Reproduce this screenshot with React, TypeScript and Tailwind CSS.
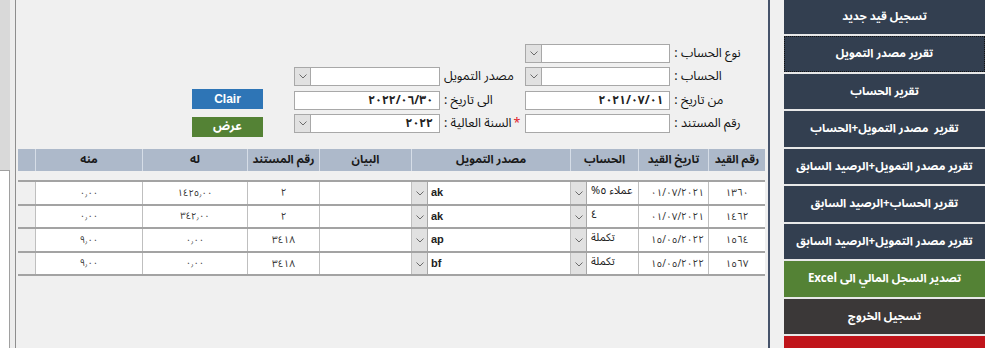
import React from "react";

const AR = "font-['Noto_Sans_Arabic','DejaVu_Sans',sans-serif]";

function Chev() {
  return (
    <svg width="8" height="5" viewBox="0 0 8 5" className="block">
      <polyline points="0.5,0.5 4,4 7.5,0.5" fill="none" stroke="#6b6b6b" strokeWidth="1" />
    </svg>
  );
}

function Combo({ value }: { value?: string }) {
  return (
    <div dir="ltr" className="flex h-[19px] w-[146px] border border-[#a8a8a8] bg-white">
      <div className="flex w-[16px] items-center justify-center border-r border-[#a8a8a8] bg-[#e1e1e1]">
        <Chev />
      </div>
      <div className="flex flex-1 items-center justify-end pr-[6px] text-[12px] font-bold leading-[15px] text-[#222]">
        <span dir="ltr">{value}</span>
      </div>
    </div>
  );
}

function TextBox({ value }: { value?: string }) {
  return (
    <div dir="ltr" className="flex h-[19px] w-[146px] items-center justify-end border border-[#a8a8a8] bg-white pr-[6px] text-[12px] font-bold leading-[15px] text-[#222]">
      <span dir="ltr">{value}</span>
    </div>
  );
}

function Row({ label, children, star }: { label: string; children: React.ReactNode; star?: boolean }) {
  return (
    <div dir="rtl" className="flex h-[19px] items-center gap-[4px]">
      <div className="flex h-[19px] w-[76px] items-center justify-end text-[12.5px] leading-[15px] text-[#111]">
        {star && <span className="ml-[2px] text-[#e0202a]">*</span>}
        <span className="whitespace-nowrap">{label}</span>
      </div>
      {children}
    </div>
  );
}

const cols = [17, 107, 105, 72, 92, 159, 68, 70, 57];
const heads = ["", "منه", "له", "رقم المستند", "البيان", "مصدر التمويل", "الحساب", "تاريخ القيد", "رقم القيد"];

const rows: { num: string; date: string; acc: React.ReactNode; src: string; doc: string; lah: string; minh: string }[] = [
  {
    num: "١٣٦٠",
    date: "٠١/٠٧/٢٠٢١",
    acc: (
      <span className="flex gap-[3px]">
        <span dir="ltr">%٥</span>
        <span dir="rtl">عملاء</span>
      </span>
    ),
    src: "ak",
    doc: "٢",
    lah: "١٤٢٥٫٠٠",
    minh: "٠٫٠٠",
  },
  { num: "١٤٦٢", date: "٠١/٠٧/٢٠٢١", acc: "٤", src: "ak", doc: "٢", lah: "٣٤٢٫٠٠", minh: "٠٫٠٠" },
  { num: "١٥٦٤", date: "١٥/٠٥/٢٠٢٢", acc: "تكملة", src: "ap", doc: "٣٤١٨", lah: "٠٫٠٠", minh: "٩٫٠٠" },
  { num: "١٥٦٧", date: "١٥/٠٥/٢٠٢٢", acc: "تكملة", src: "bf", doc: "٣٤١٨", lah: "٠٫٠٠", minh: "٩٫٠٠" },
];

function CellBtn() {
  return (
    <div className="flex h-full w-[16px] shrink-0 items-center justify-center border-r border-[#a8a8a8] bg-[#e1e1e1] pt-[2px]">
      <Chev />
    </div>
  );
}

const side = [
  { t: "تسجيل قيد جديد", c: "bg-[#333f50]" },
  { t: "تقرير مصدر التمويل", c: "bg-[#333f50] border border-dotted border-[#111]" },
  { t: "تقرير الحساب", c: "bg-[#333f50]" },
  { t: "تقرير  مصدر التمويل+الحساب", c: "bg-[#333f50]" },
  { t: "تقرير مصدر التمويل+الرصيد السابق", c: "bg-[#333f50]" },
  { t: "تقرير الحساب+الرصيد السابق", c: "bg-[#333f50]" },
  { t: "تقرير مصدر التمويل+الرصيد السابق", c: "bg-[#333f50]" },
  { t: "تصدير السجل المالي الى Excel", c: "bg-[#548235]" },
  { t: "تسجيل الخروج", c: "bg-[#3b3838]" },
  { t: "", c: "bg-[#c0141a]" },
];

export default function App() {
  return (
    <div className={`flex h-[348px] w-[1000px] overflow-hidden bg-[#f0f0f0] ${AR}`}>
      {/* left strip */}
      <div className="flex w-[16px] shrink-0">
        <div className="flex w-[10px] flex-col">
          <div className="h-[170px] bg-[#d9d9d9]" />
          <div className="flex-1 border-r border-t border-[#a0a0a0] bg-white" />
        </div>
        <div className="w-[5px] bg-[#ededed]" />
        <div className="w-[1px] bg-[#8e8e8e]" />
      </div>

      {/* main */}
      <div className="flex w-[752px] shrink-0 flex-col pt-[44px]">
        <div className="flex pl-[176px]">
          <div className="mt-[45px] flex w-[71px] flex-col gap-[8px]">
            <div className="flex h-[20px] items-center justify-center bg-[#2e75b6] font-['Liberation_Sans',sans-serif] text-[12px] font-bold text-white">
              Clair
            </div>
            <div className="flex h-[20px] items-center justify-center bg-[#548235] text-[12px] font-bold text-white">
              عرض
            </div>
          </div>
          <div className="ml-[30px] flex w-[227px] flex-col gap-[4.3px]">
            <div className="h-[19px]" />
            <Row label="مصدر التمويل">
              <Combo />
            </Row>
            <Row label="الى تاريخ :">
              <TextBox value="٢٠٢٢/٠٦/٣٠" />
            </Row>
            <Row label="السنة العالية :" star>
              <Combo value="٢٠٢٢" />
            </Row>
          </div>
          <div className="ml-[5px] flex w-[225px] flex-col gap-[4.3px]">
            <Row label="نوع الحساب :">
              <Combo />
            </Row>
            <Row label="الحساب :">
              <Combo />
            </Row>
            <Row label="من تاريخ :">
              <TextBox value="٢٠٢١/٠٧/٠١" />
            </Row>
            <Row label="رقم المستند :">
              <TextBox />
            </Row>
          </div>
        </div>

        {/* table */}
        <div className="ml-[2px] mt-[12px] flex w-[747px] flex-col">
          <div className="flex h-[22px] bg-[#adb9ca]">
            {heads.map((h, i) => (
              <div
                key={i}
                style={{ width: cols[i] }}
                className={`flex items-center justify-center text-[11.5px] font-bold text-[#1a1a1a] ${i > 0 ? "border-l border-[#d6dde7]" : ""}`}
              >
                <span dir="rtl" className="whitespace-nowrap">{h}</span>
              </div>
            ))}
          </div>
          <div className="h-[9px]" />
          {rows.map((r, ri) => (
            <div key={ri} className="flex h-[23.5px] border-t-2 border-[#a3a3a3]">
              <div style={{ width: cols[0] }} className="bg-[#f0f0f0]" />
              <div style={{ width: cols[1] }} className="flex items-center justify-center border-l border-[#bfbfbf] bg-white text-[9.5px] text-[#333]">
                <span dir="ltr">{r.minh}</span>
              </div>
              <div style={{ width: cols[2] }} className="flex items-center justify-center border-l border-[#bfbfbf] bg-white text-[9.5px] text-[#333]">
                <span dir="ltr">{r.lah}</span>
              </div>
              <div style={{ width: cols[3] }} className="flex items-center justify-center border-l border-[#bfbfbf] bg-white text-[10px] text-[#333]">
                <span dir="ltr">{r.doc}</span>
              </div>
              <div style={{ width: cols[4] }} className="border-l border-[#bfbfbf] bg-white" />
              <div style={{ width: cols[5] }} className="flex items-stretch border-l border-[#bfbfbf] bg-white">
                <CellBtn />
                <span className="pl-[3px] pt-[1px] font-['Liberation_Sans',sans-serif] text-[11px] font-bold leading-[18px] text-[#222]">{r.src}</span>
              </div>
              <div style={{ width: cols[6] }} className="flex items-stretch border-l border-[#bfbfbf] bg-white">
                <CellBtn />
                <div className="pl-[4px] text-[11px] leading-[17px] text-[#222]">{r.acc}</div>
              </div>
              <div style={{ width: cols[7] }} className="flex items-center justify-end border-l border-[#bfbfbf] bg-white pr-[4px] text-[10px] text-[#333]">
                <span dir="ltr">{r.date}</span>
              </div>
              <div style={{ width: cols[8] }} className="flex items-center justify-center border-l border-[#bfbfbf] bg-white text-[10px] text-[#333]">
                <span dir="ltr">{r.num}</span>
              </div>
            </div>
          ))}
          <div className="h-[2px] bg-[#a3a3a3]" />
        </div>
      </div>

      {/* divider */}
      <div className="w-[2px] shrink-0 bg-[#46536a]" />
      <div className="w-[14px] shrink-0" />

      {/* sidebar */}
      <div className="-mt-[1.5px] flex w-[201px] shrink-0 flex-col gap-[2px] bg-[#e8e8e8]">
        {side.map((b, i) => (
          <div
            key={i}
            dir="rtl"
            className={`flex h-[35.5px] shrink-0 items-center justify-center text-[11.5px] font-bold text-white ${b.c}`}
          >
            <span className="whitespace-pre">{b.t}</span>
          </div>
        ))}
      </div>
      <div className="flex-1 bg-white" />
    </div>
  );
}
